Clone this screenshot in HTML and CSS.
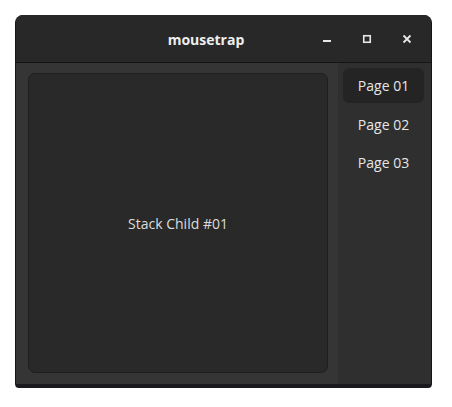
FILE: index.html
```html
<!DOCTYPE html>
<html>
<head>
<meta charset="utf-8">
<link rel="stylesheet" href="styles.css">
</head>
<body>
<div class="window">
  <div class="header">
    <div class="title">mousetrap</div>
    <div class="controls">
      <div class="ctl"><svg width="10" height="10" viewBox="0 0 10 10"><rect x="1" y="6" width="8" height="2" fill="#e8e8e8"/></svg></div>
      <div class="ctl"><svg width="10" height="10" viewBox="0 0 10 10"><rect x="1.75" y="1.75" width="6.5" height="6.5" fill="none" stroke="#e8e8e8" stroke-width="1.6"/></svg></div>
      <div class="ctl"><svg width="10" height="10" viewBox="0 0 10 10"><path d="M1.5 1.5 L8.5 8.5 M8.5 1.5 L1.5 8.5" stroke="#e8e8e8" stroke-width="1.8"/></svg></div>
    </div>
  </div>
  <div class="body">
    <div class="main">
      <div class="frame">Stack Child #01</div>
    </div>
    <div class="sidebar">
      <div class="item selected">Page 01</div>
      <div class="item">Page 02</div>
      <div class="item">Page 03</div>
    </div>
  </div>
</div>
</body>
</html>
```
FILE: styles.css
```css
html, body { margin: 0; padding: 0; background: #ffffff; }
body { padding: 15px 0 0 15px; font-family: "Open Sans", "Noto Sans", sans-serif; }
.window {
  width: 415px;
  height: 369px;
  border: 1px solid #151515;
  border-top: none;
  border-bottom: 4px solid #1a1a1c;
  border-radius: 8px 8px 4px 4px;
  background: #333333;
  display: flex;
  flex-direction: column;
  overflow: hidden;
}
.header {
  height: 47px;
  background: #282828;
  border-bottom: 1px solid #141414;
  display: flex;
  align-items: center;
  color: #eeeeee;
  flex: none;
}
.title {
  flex: 1;
  text-align: center;
  font-weight: bold;
  font-size: 14px;
  padding-left: 89px;
  padding-top: 1px;
}
.controls { display: flex; padding-right: 4px; }
.ctl { width: 40px; height: 24px; display: flex; align-items: center; justify-content: center; }
.body { flex: 1; display: flex; }
.main { width: 322px; padding: 10px 10px 11px 12px; box-sizing: border-box; background: #353535; display: flex; }
.frame {
  flex: 1;
  background: #292929;
  border: 1px solid #1e1e1e;
  border-radius: 7px;
  display: flex;
  align-items: center;
  justify-content: center;
  color: #dcdcdc;
  font-size: 14px;
}
.sidebar { flex: 1; background: #2f2f2f; padding: 5px 7px 0 5px; display: flex; flex-direction: column; }
.item { height: 38px; flex: none; display: flex; align-items: center; justify-content: center; color: #e6e6e6; font-size: 14px; border-radius: 6px; }
.item.selected { background: #242424; height: 35px; margin-bottom: 2px; }
```
